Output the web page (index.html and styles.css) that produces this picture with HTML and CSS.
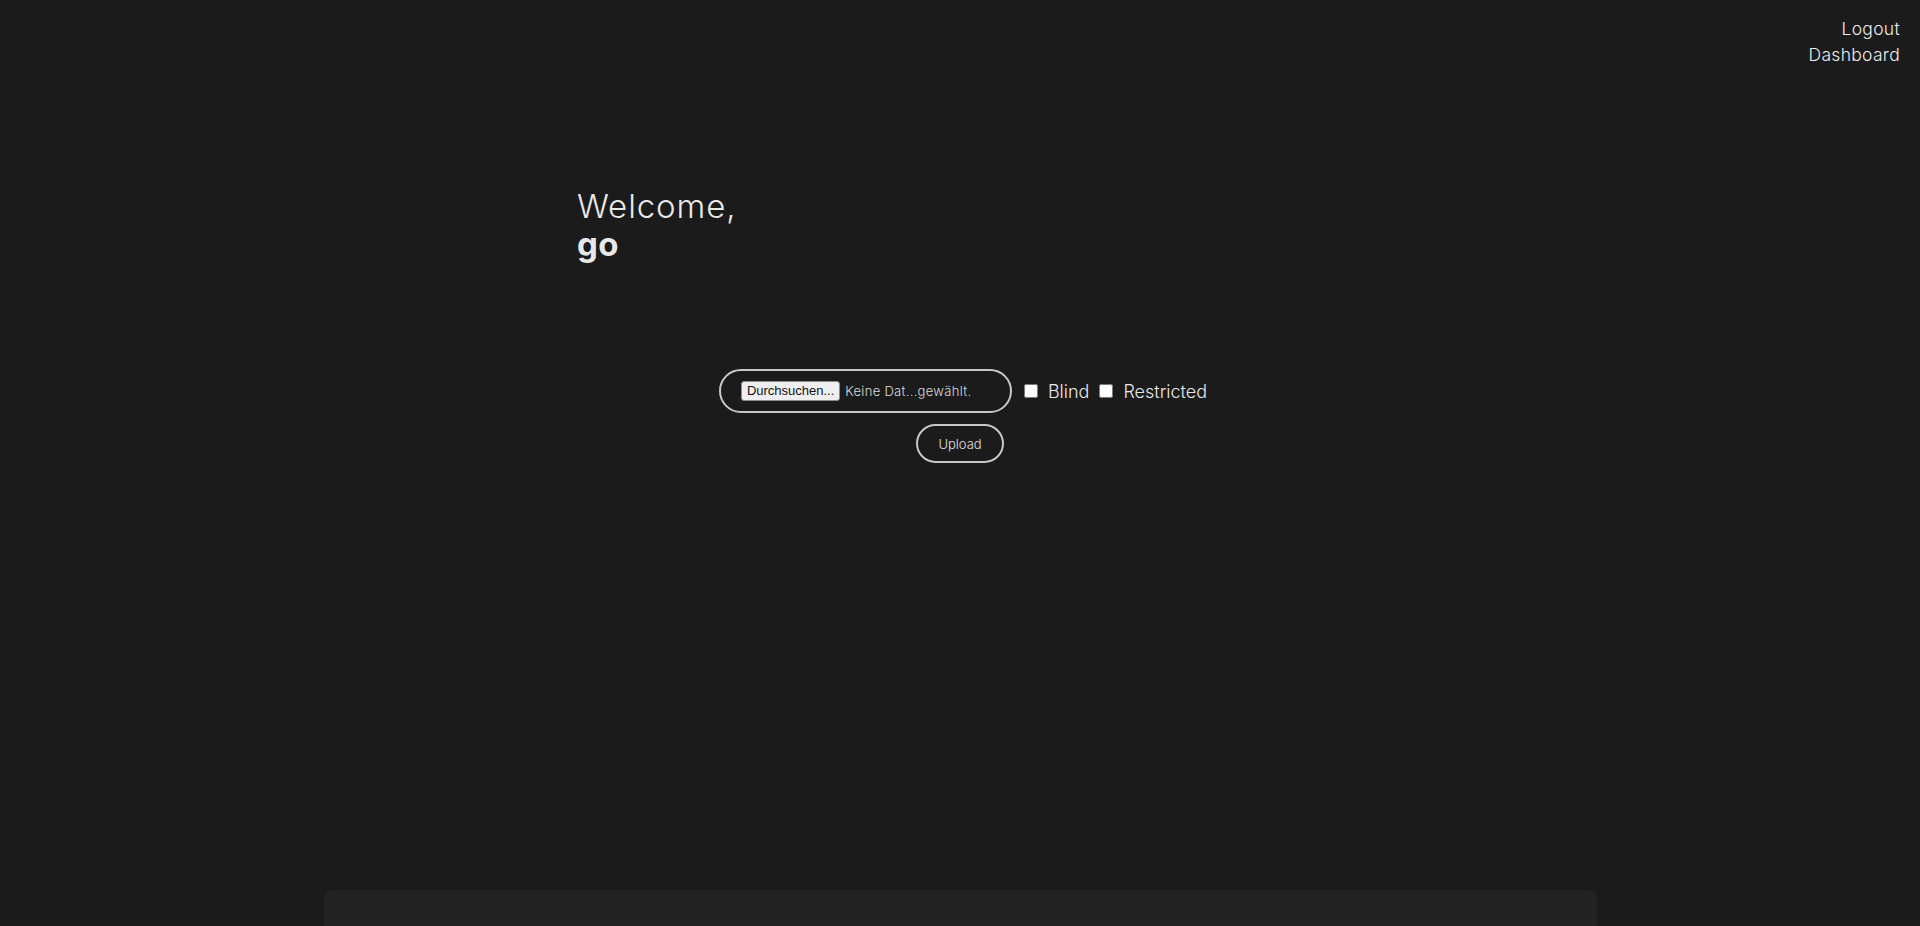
FILE: index.html
```html
<!DOCTYPE html>
<html lang="de">
<head>
<meta charset="utf-8">
<title>Welcome</title>
<link rel="stylesheet" href="styles.css">
</head>
<body>
<header class="topnav">
  <a class="navlink" href="#">Logout</a>
  <a class="navlink" href="#">Dashboard</a>
</header>
<main class="page">
  <section class="welcome">
    <h1 class="greeting">Welcome,</h1>
    <div class="username">go</div>
  </section>
  <form class="upload-form">
    <div class="upload-row">
      <label class="file-field">
        <span class="file-button">Durchsuchen...</span>
        <span class="file-name">Keine Dat...gewählt.</span>
      </label>
      <label class="check"><input type="checkbox" class="check-box"><span>Blind</span></label>
      <label class="check"><input type="checkbox" class="check-box"><span>Restricted</span></label>
    </div>
    <button type="button" class="upload-btn">Upload</button>
  </form>
</main>
<div class="panel"></div>
</body>
</html>
```
FILE: styles.css
```css
html, body {
  margin: 0;
  padding: 0;
  height: 100%;
}
body {
  background: #1b1b1b;
  color: #e8e8e8;
  font-family: Inter, "Open Sans", sans-serif;
  font-weight: 300;
  overflow: hidden;
  display: flex;
  flex-direction: column;
}
.topnav {
  display: flex;
  flex-direction: column;
  align-items: flex-end;
  padding: 16px 20px 0 0;
}
.navlink {
  color: #ececec;
  text-decoration: none;
  font-size: 17.5px;
  line-height: 26px;
  letter-spacing: 0.3px;
}
.page {
  width: 766px;
  margin: 0 auto;
  display: flex;
  flex-direction: column;
}
.welcome {
  padding-top: 119px;
}
.greeting {
  margin: 0;
  font-size: 33px;
  font-weight: 300;
  line-height: 38px;
  letter-spacing: 0.9px;
}
.username {
  font-size: 33px;
  font-weight: 700;
  line-height: 38px;
  letter-spacing: 0.5px;
}
.upload-form {
  display: flex;
  flex-direction: column;
  align-items: center;
  gap: 11px;
  margin-top: 106px;
}
.upload-row {
  display: flex;
  align-items: center;
  gap: 12px;
  margin-left: 6px;
}
.file-field {
  display: flex;
  align-items: center;
  gap: 5px;
  width: 251px;
  height: 40px;
  padding: 0 18px 0 20px;
  border: 2px solid #c8c8c8;
  border-radius: 24px;
}
.file-button {
  font-family: "Liberation Sans", Arial, sans-serif;
  font-weight: 400;
  font-size: 13px;
  color: #111;
  background: #efeff2;
  border: 1px solid #8a8a90;
  border-radius: 3px;
  padding: 1px 5px 2px;
  line-height: 15px;
}
.file-name {
  font-size: 13px;
  color: #dcdcdc;
  letter-spacing: 0.3px;
}
.check {
  display: flex;
  align-items: center;
  gap: 10px;
  font-size: 18px;
  color: #e8e8e8;
  letter-spacing: 0;
}
.check + .check {
  margin-left: -2px;
}
.check-box {
  margin: 0;
  width: 14px;
  height: 14px;
}
.upload-btn {
  font-family: Inter, "Open Sans", sans-serif;
  font-weight: 300;
  font-size: 13px;
  color: #e0e0e0;
  background: transparent;
  border: 2px solid #c8c8c8;
  border-radius: 20px;
  width: 88px;
  height: 39px;
  margin-left: 0;
  cursor: pointer;
}
.panel {
  margin: auto auto 0;
  width: 1273px;
  height: 36px;
  background: #232323;
  border-radius: 8px 8px 0 0;
}
```
